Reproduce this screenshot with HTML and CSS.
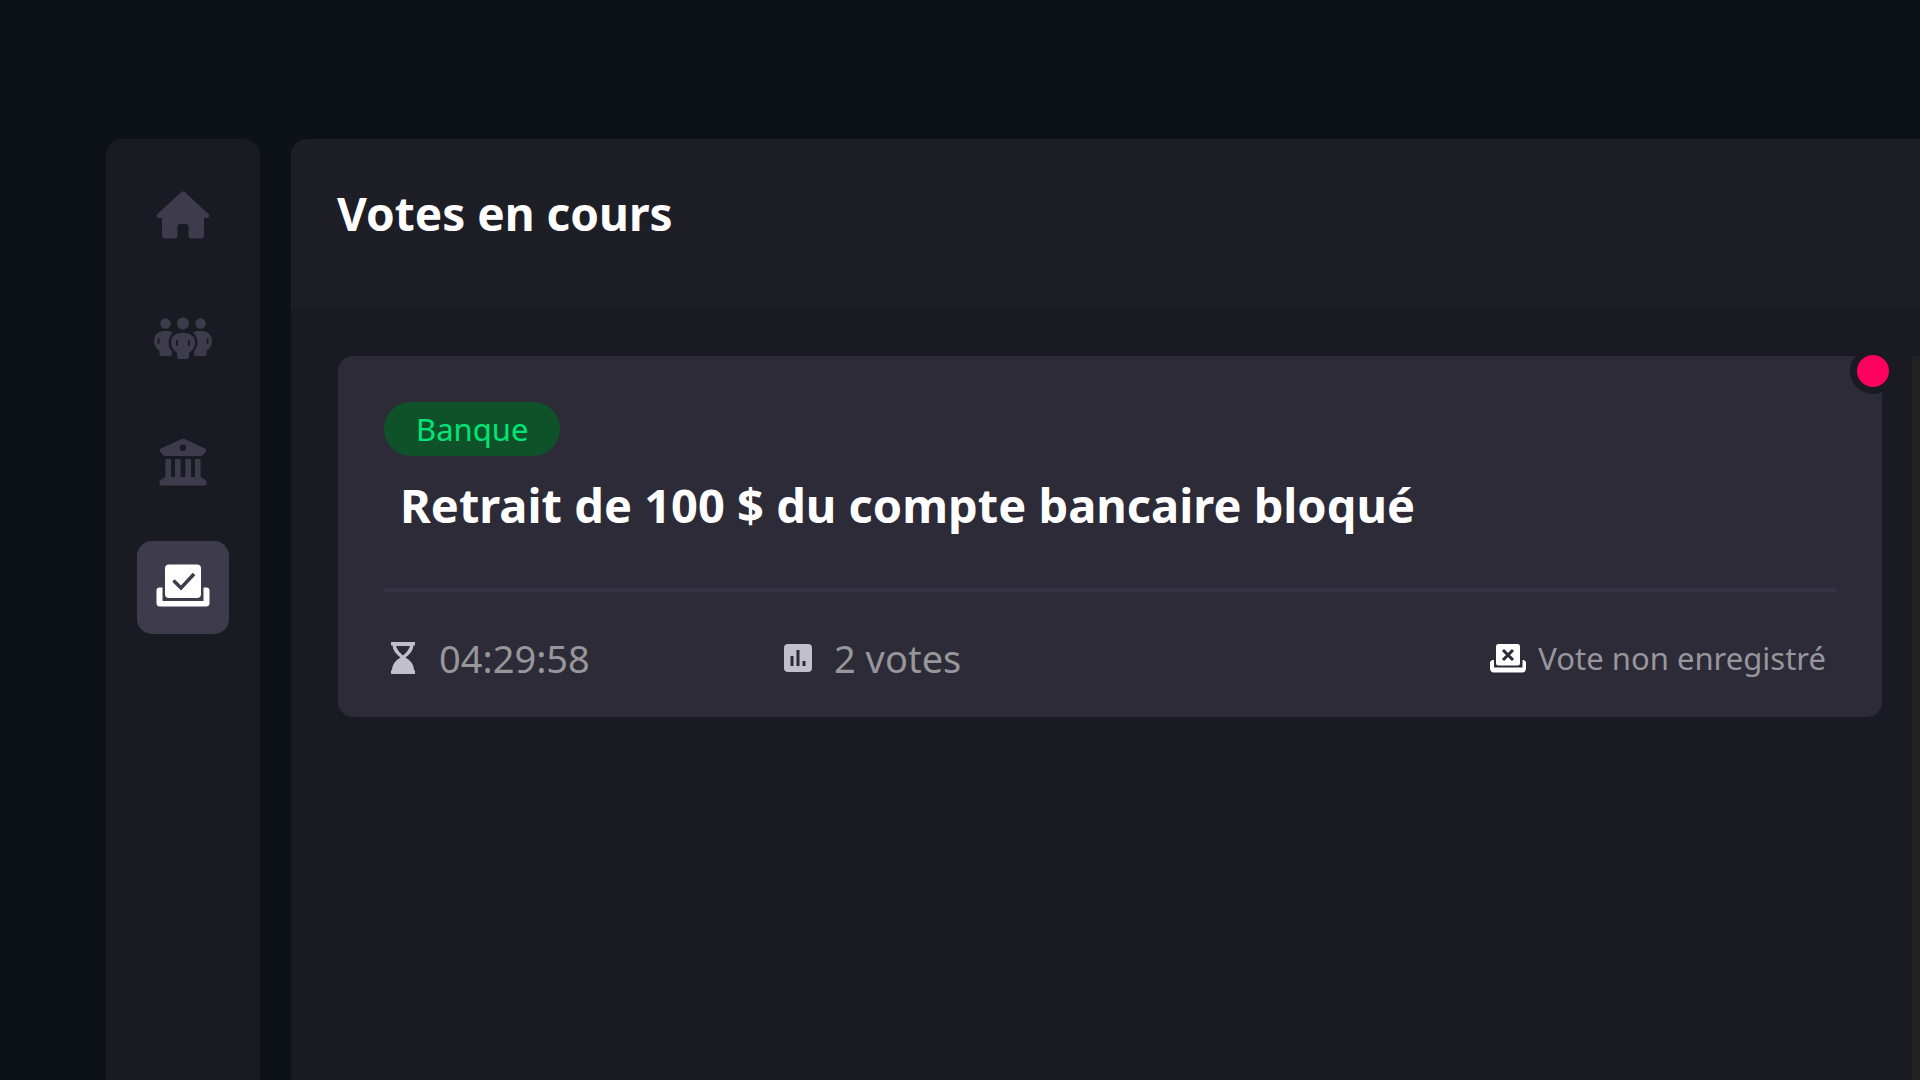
FILE: index.html
```html
<!DOCTYPE html>
<html lang="fr">
<head>
    <meta charset="UTF-8">
    <meta name="viewport" content="width=device-width, initial-scale=1.0">
    <title>Votes en cours</title>
    <link rel="stylesheet" href="styles.css">
</head>
<body>
    <nav class="sidebar">
        <a href="#" class="nav-link" aria-label="Accueil">
            <svg viewBox="0 0 60 60">
                <path d="M28.6 5.7Q30 4.6 31.4 5.7L56 28.6Q57.2 31 54.5 32H51V49.5Q51 52.5 48 52.5H38.5Q35.5 52.5 35.5 49.5V41Q35.5 38 32.5 38H27.5Q24.5 38 24.5 41V49.5Q24.5 52.5 21.5 52.5H12Q9 52.5 9 49.5V32H5.5Q2.8 31 4 28.6Z"/>
            </svg>
        </a>
        <a href="#" class="nav-link" aria-label="Membres">
            <svg viewBox="0 0 60 60">
                <circle cx="12.5" cy="13.5" r="5.2"/>
                <circle cx="30" cy="13.5" r="6"/>
                <circle cx="47.5" cy="13.5" r="5.2"/>
                <path d="M11 21H15Q19 21 19.5 23Q15.5 27.5 15.5 32.5Q15.5 37.5 19 41.5V43.5Q19 46 16.5 46H9Q6.5 46 6.5 43.5V41Q1 37 1 31Q2 21 11 21Z"/>
                <path d="M49 21H45Q41 21 40.5 23Q44.5 27.5 44.5 32.5Q44.5 37.5 41 41.5V43.5Q41 46 43.5 46H51Q53.5 46 53.5 43.5V41Q59 37 59 31Q58 21 49 21Z"/>
                <path d="M27 23H33Q42 24 42 33Q42 39 36 42.5V46Q36 49 33.5 49H26.5Q24 49 24 46V42.5Q18 39 18 33Q18 24 27 23Z"/>
                <path class="cut" d="M5.5 29V33M24 31V35M36 31V35M54.5 29V33"/>
            </svg>
        </a>
        <a href="#" class="nav-link" aria-label="Banque">
            <svg viewBox="0 0 60 60">
                <path fill-rule="evenodd" d="M28.5 4.9Q30 4.2 31.5 4.9L52 14.5Q54 15.5 53 17.5L50 21Q49.5 22 48 22H12Q10.5 22 10 21L7 17.5Q6 15.5 8 14.5ZM30 10.6A3.2 3.2 0 1 0 30 17A3.2 3.2 0 1 0 30 10.6Z"/>
                <path d="M12.5 25H18V43H22V25H27.5V43H32.5V25H38V43H42V25H47.5V43L52.5 46Q53.5 46.7 53.5 48V49.5Q53.5 51.5 51.5 51.5H8.5Q6.5 51.5 6.5 49.5V48Q6.5 46.7 7.5 46L12.5 43Z"/>
            </svg>
        </a>
        <a href="#" class="nav-link active" aria-label="Votes">
            <svg viewBox="0 0 60 60">
                <rect x="12" y="6.5" width="36" height="33.5" rx="4"/>
                <path d="M6.5 29.5H9.5V43H50.5V29.5H53.5Q56.5 29.5 56.5 32.5V45Q56.5 48.5 53 48.5H7Q3.5 48.5 3.5 45V32.5Q3.5 29.5 6.5 29.5Z"/>
                <path class="mark" d="M20.5 22.5L28 30L41 16"/>
            </svg>
        </a>
    </nav>
    <main class="panel">
        <header class="panel-header">
            <h1>Votes en cours</h1>
        </header>
        <div class="panel-content">
            <article class="vote-card">
                <span class="dot"></span>
                <span class="badge">Banque</span>
                <h2>Retrait de 100 $ du compte bancaire bloqué</h2>
                <div class="vote-infos">
                    <div class="info">
                        <svg viewBox="0 0 32 32">
                            <path fill-rule="evenodd" d="M4 0H28V3.5H26.5Q26 10 18.5 15.5Q26.5 20 27 27.500L28 29V32H4V29L5 27.500Q5.500 20 13.500 15.500Q6 10 5.500 3.500H4ZM9 4Q10.500 9 16 13.500Q21.500 9 23 4Z"/>
                        </svg>
                        <span>04:29:58</span>
                    </div>
                    <div class="info">
                        <svg viewBox="0 0 32 32">
                            <rect x="2" y="2" width="28" height="28" rx="4"/>
                            <path class="bars" d="M10 14V24M16 8V24M22 19V24"/>
                        </svg>
                        <span>2 votes</span>
                    </div>
                    <div class="info status">
                        <svg viewBox="0 0 36 36">
                            <rect x="6" y="4" width="24" height="21.5" rx="2.5"/>
                            <path d="M2 20H4V27.5H32.5V20H34L36 22V29Q35 32.5 32.5 32.5H3.5Q1 32.5 0 29V22Z"/>
                            <path class="cross" d="M13 10L23 20M23 10L13 20"/>
                        </svg>
                        <span>Vote non enregistré</span>
                    </div>
                </div>
            </article>
            <div class="scroll-track"></div>
        </div>
    </main>
</body>
</html>
```

FILE: styles.css
```css
* {
    box-sizing: border-box;
}

body {
    margin: 0;
    padding: 139px 0 0 106px;
    height: 100vh;
    display: flex;
    gap: 31px;
    overflow: hidden;
    background-color: #0d1118;
    color: white;
    font-family: "Noto Sans", "Open Sans", sans-serif;
}

.sidebar {
    display: flex;
    flex-direction: column;
    gap: 31px;
    padding: 30px 31px;
    background-color: #1a1a22;
    border-radius: 16px 16px 0 0;
}

.nav-link {
    display: flex;
    align-items: center;
    justify-content: center;
    width: 92px;
    height: 93px;
    border-radius: 15px;
}

.nav-link svg {
    width: 60px;
    height: 60px;
    fill: #3e3c4c;
}

.nav-link.active {
    background-color: #3e3c4c;
}

.nav-link.active svg {
    fill: white;
}

.cut {
    fill: none;
    stroke: #1a1a22;
    stroke-width: 2;
    stroke-linecap: round;
}

.mark {
    fill: none;
    stroke: #3e3c4c;
    stroke-width: 3.5;
}

.panel {
    flex: 1;
    display: flex;
    flex-direction: column;
    background-color: #1a1a22;
    border-radius: 16px 0 0 0;
    overflow: hidden;
}

.panel-header {
    padding: 46px;
    background-color: #1e1e27;
}

h1, h2 {
    margin: 0;
    font-weight: bold;
}

h1 {
    font-size: 46px;
    line-height: 56px;
    margin-bottom: 22px;
}

.panel-content {
    flex: 1;
    display: flex;
    align-items: flex-start;
    gap: 30px;
    padding: 47px 0 0 47px;
}

.vote-card {
    position: relative;
    flex: 1;
    padding: 46px 46px 32px;
    border-radius: 15px;
    background-color: #2c2b37;
}

.dot {
    position: absolute;
    top: -8px;
    right: -14px;
    width: 46px;
    height: 46px;
    border: 7px solid #191a22;
    border-radius: 50%;
    background-color: #ff005c;
}

.badge {
    display: inline-block;
    padding: 0 32px;
    border-radius: 27px;
    background-color: #0f522a;
    color: #00e676;
    font-size: 31px;
    line-height: 54px;
    vertical-align: top;
}

h2 {
    font-size: 47px;
    padding: 18px 16px 52px;
    line-height: 62px;
    border-bottom: 4px solid #353341;
}

.vote-infos {
    display: flex;
    align-items: center;
    padding-top: 39px;
    color: #97969a;
}

.info {
    display: flex;
    align-items: center;
    gap: 20px;
    width: 395px;
    padding-left: 3px;
    font-size: 38px;
    line-height: 54px;
}

.info svg {
    width: 32px;
    height: 32px;
    fill: #c0bfca;
}

.bars {
    fill: none;
    stroke: #2c2b37;
    stroke-width: 3;
}

.status {
    width: auto;
    margin-left: auto;
    padding-right: 10px;
    gap: 12px;
    font-size: 31px;
}

.status svg {
    width: 36px;
    height: 36px;
    fill: white;
}

.cross {
    fill: none;
    stroke: #2c2b37;
    stroke-width: 3;
}

.scroll-track {
    align-self: stretch;
    width: 8px;
    background-color: #222225;
}
```
